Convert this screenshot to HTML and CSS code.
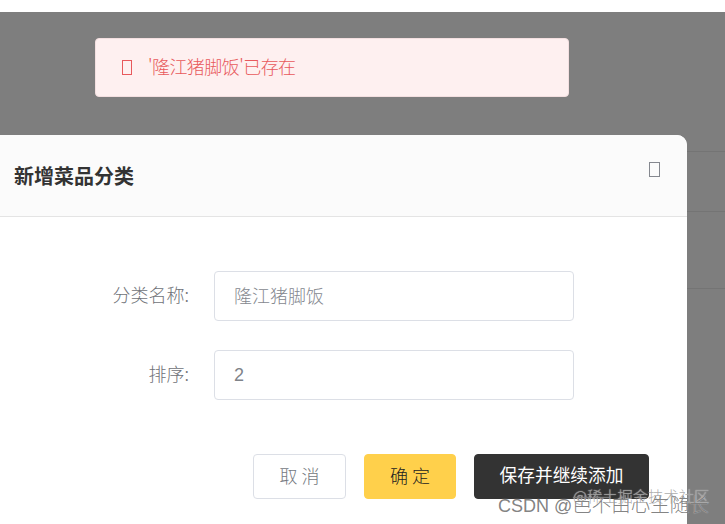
FILE: index.html
```html
<!DOCTYPE html>
<html lang="zh">
<head>
<meta charset="utf-8">
<title>新增菜品分类</title>
<link rel="stylesheet" href="styles.css">
</head>
<body>
<div class="page">
  <div class="bg-row bg-row-a"></div>
  <div class="bg-row bg-row-b"></div>
  <div class="bg-row bg-row-c"></div>
</div>
<div class="toast">
  <span class="tofu tofu-error"></span>
  <span class="toast-text">'隆江猪脚饭'已存在</span>
</div>
<div class="dialog">
  <div class="dialog-header">
    <span class="dialog-title">新增菜品分类</span>
    <span class="tofu tofu-close"></span>
  </div>
  <div class="dialog-body">
    <div class="form-row">
      <label class="form-label">分类名称:</label>
      <div class="input placeholder"><span class="lift">隆江猪脚饭</span></div>
    </div>
    <div class="form-row">
      <label class="form-label">排序:</label>
      <div class="input input-number">2</div>
    </div>
  </div>
  <div class="dialog-footer">
    <button class="btn btn-cancel"><span class="lift">取 消</span></button>
    <button class="btn btn-ok"><span class="lift">确 定</span></button>
    <button class="btn btn-save"><span class="lift">保存并继续添加</span></button>
  </div>
</div>
<div class="wm wm-back">@稀土掘金技术社区</div>
<div class="wm wm-front">CSDN @<span class="wm-cjk">芭不由心生随长</span></div>
</body>
</html>
```
FILE: styles.css
```css
* { box-sizing: border-box; }
html, body { margin: 0; height: 100%; overflow: hidden; background: #fff; }
body { font-family: "Noto Sans CJK SC", "Liberation Sans", sans-serif; }
.page { position: absolute; inset: 12px 0 0 0; background: #7e7e7e; }
.bg-row { position: absolute; left: 0; right: 0; height: 1px; background: #747474; }
.bg-row-a { top: 139px; }
.bg-row-b { top: 199px; }
.bg-row-c { top: 276px; }
.toast { position: absolute; left: 95px; top: 38px; width: 474px; height: 59px; background: #fef0f0; border: 1px solid #f3dfe0; border-radius: 4px; display: flex; align-items: center; padding-left: 26px; color: #e8595c; font-size: 18px; }
.tofu { display: block; border: 1px solid currentColor; }
.tofu-error { width: 10px; height: 15px; margin-right: 16px; }
.toast-text { font-weight: 300; letter-spacing: -0.55px; line-height: 1; margin-top: -4px; }
.dialog { position: absolute; top: 135px; left: -113px; width: 800px; height: 389px; background: #fff; border-radius: 8px 10px 0 0; overflow: hidden; }
.dialog-header { height: 82px; background: #fbfbfb; border-bottom: 1px solid #e4e4e4; display: flex; align-items: center; justify-content: space-between; padding: 0 27px 0 127px; }
.dialog-title { font-size: 20px; font-weight: 700; line-height: 1; color: #333; }
.tofu-close { width: 11px; height: 15px; margin-top: -12px; color: #85888f; border-width: 1.5px; }
.dialog-body { padding-top: 54px; display: flex; flex-direction: column; gap: 29px; }
.form-row { display: flex; align-items: center; }
.form-label { width: 302px; text-align: right; font-size: 18px; font-weight: 300; line-height: 1; margin-top: -4px; color: #6f7278; }
.input { margin-left: 25px; width: 360px; height: 50px; border: 1px solid #dcdfe6; border-radius: 4px; padding-left: 19px; display: flex; align-items: center; font-size: 18px; color: #7f8389; }
.input-number { font-family: "Liberation Sans", sans-serif; }
.lift { display: block; line-height: 1; margin-top: -3px; }
.placeholder { color: #85888f; font-weight: 300; }
.dialog-footer { margin-top: 54px; padding-right: 38px; display: flex; justify-content: flex-end; gap: 18px; }
.btn { height: 45px; border-radius: 4px; font: inherit; font-size: 18px; padding: 0; cursor: pointer; }
.btn-cancel { width: 93px; background: #fff; border: 1px solid #dcdfe6; color: #75787e; font-weight: 300; }
.btn-ok { width: 92px; background: #ffd04b; border: 1px solid #ffd04b; color: #222; font-weight: 300; }
.btn-save { width: 175px; background: #333; border: 1px solid #333; color: #fff; font-size: 17.7px; font-weight: 400; }
.wm { position: absolute; white-space: nowrap; line-height: 1; text-shadow: 0 0 1px rgba(255,255,255,.75); }
.wm-front { left: 498px; top: 494px; font-family: "Liberation Sans", "Noto Sans CJK SC", sans-serif; font-size: 18px; color: rgba(115,115,115,.9); }
.wm-cjk { font-family: "Noto Sans CJK SC", sans-serif; font-size: 19.5px; font-weight: 300; }
.wm-back { left: 573px; top: 488px; font-size: 15.3px; font-weight: 300; color: rgba(150,150,150,.8); }
```
